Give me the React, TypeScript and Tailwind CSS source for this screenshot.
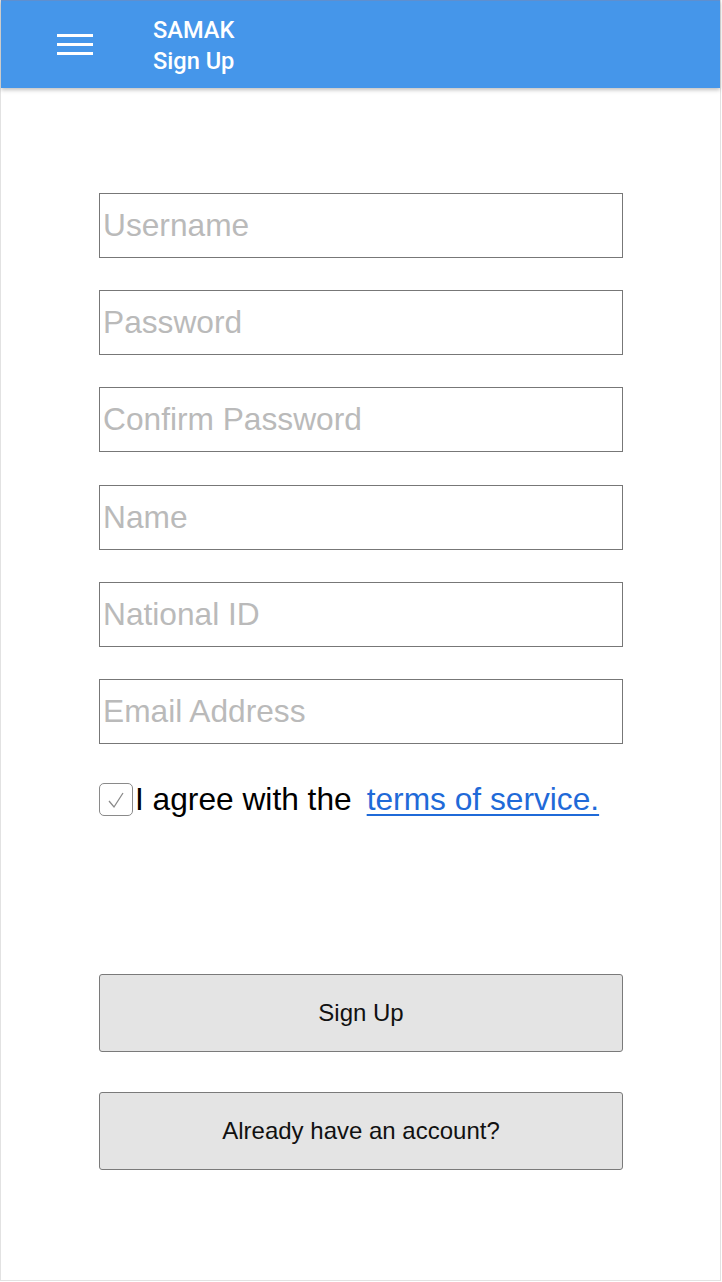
import React, { useState } from 'react'

const fields = ['Username', 'Password', 'Confirm Password', 'Name', 'National ID', 'Email Address']

export default function App() {
    const [agree, setAgree] = useState(true)

    return (
        <div className="w-[721px] h-[1281px] bg-white border-x border-b border-[#e2e2e2] flex flex-col" style={{ fontFamily: '"Liberation Sans", Arial, sans-serif' }}>
            {/* Top bar */}
            <header className="h-[88px] shrink-0 bg-[#4596ea] border-t border-[#5f8fcf] shadow-[0_2px_4px_rgba(0,0,0,0.25)] flex items-center">
                <button type="button" className="ml-[56px] w-[36px] flex flex-col gap-[6px]">
                    <span className="block h-[3px] bg-white" />
                    <span className="block h-[3px] bg-white" />
                    <span className="block h-[3px] bg-white" />
                </button>
                <div className="ml-[60px] text-white font-medium text-[23.6px] leading-[31px] mt-[3px]" style={{ fontFamily: 'Roboto, sans-serif' }}>
                    <div>SAMAK</div>
                    <div>Sign Up</div>
                </div>
            </header>

            {/* Form */}
            <div className="flex flex-col pl-[98px] pt-[105px] w-[622px]">
                <div className="flex flex-col gap-[32.2px]">
                    {fields.map(f => (
                        <input
                            key={f}
                            type={f.includes('Password') ? 'password' : 'text'}
                            placeholder={f}
                            className="h-[65px] w-[524px] border border-[#777] bg-white pl-[3px] text-[31.7px] text-black placeholder:text-[#bababa] outline-none"
                        />
                    ))}
                </div>

                <label className="mt-[39px] flex items-center h-[34px] text-[31.7px] text-black cursor-pointer">
                    <span
                        onClick={() => setAgree(!agree)}
                        className="w-[34px] h-[33px] border border-[#8a8a8a] rounded-[5px] flex items-center justify-center shrink-0"
                    >
                        {agree && (
                            <svg width="20" height="20" viewBox="0 0 20 20" fill="none">
                                <path d="M3 11 L8 17 L17 3" stroke="#8a8a8a" strokeWidth="1.3" />
                            </svg>
                        )}
                    </span>
                    <span className="ml-[2px]">I agree with the</span>
                    <a href="#" className="ml-[15px] text-[#1f6ad8] underline underline-offset-[4px] decoration-2">terms of service.</a>
                </label>

                <button type="button" className="mt-[157px] h-[78px] w-[524px] bg-[#e4e4e4] border border-[#7a7a7a] rounded-[3px] text-[24px] text-[#111]">
                    Sign Up
                </button>
                <button type="button" className="mt-[40px] h-[78px] w-[524px] bg-[#e4e4e4] border border-[#7a7a7a] rounded-[3px] text-[24px] text-[#111]">
                    Already have an account?
                </button>
            </div>
        </div>
    )
}
